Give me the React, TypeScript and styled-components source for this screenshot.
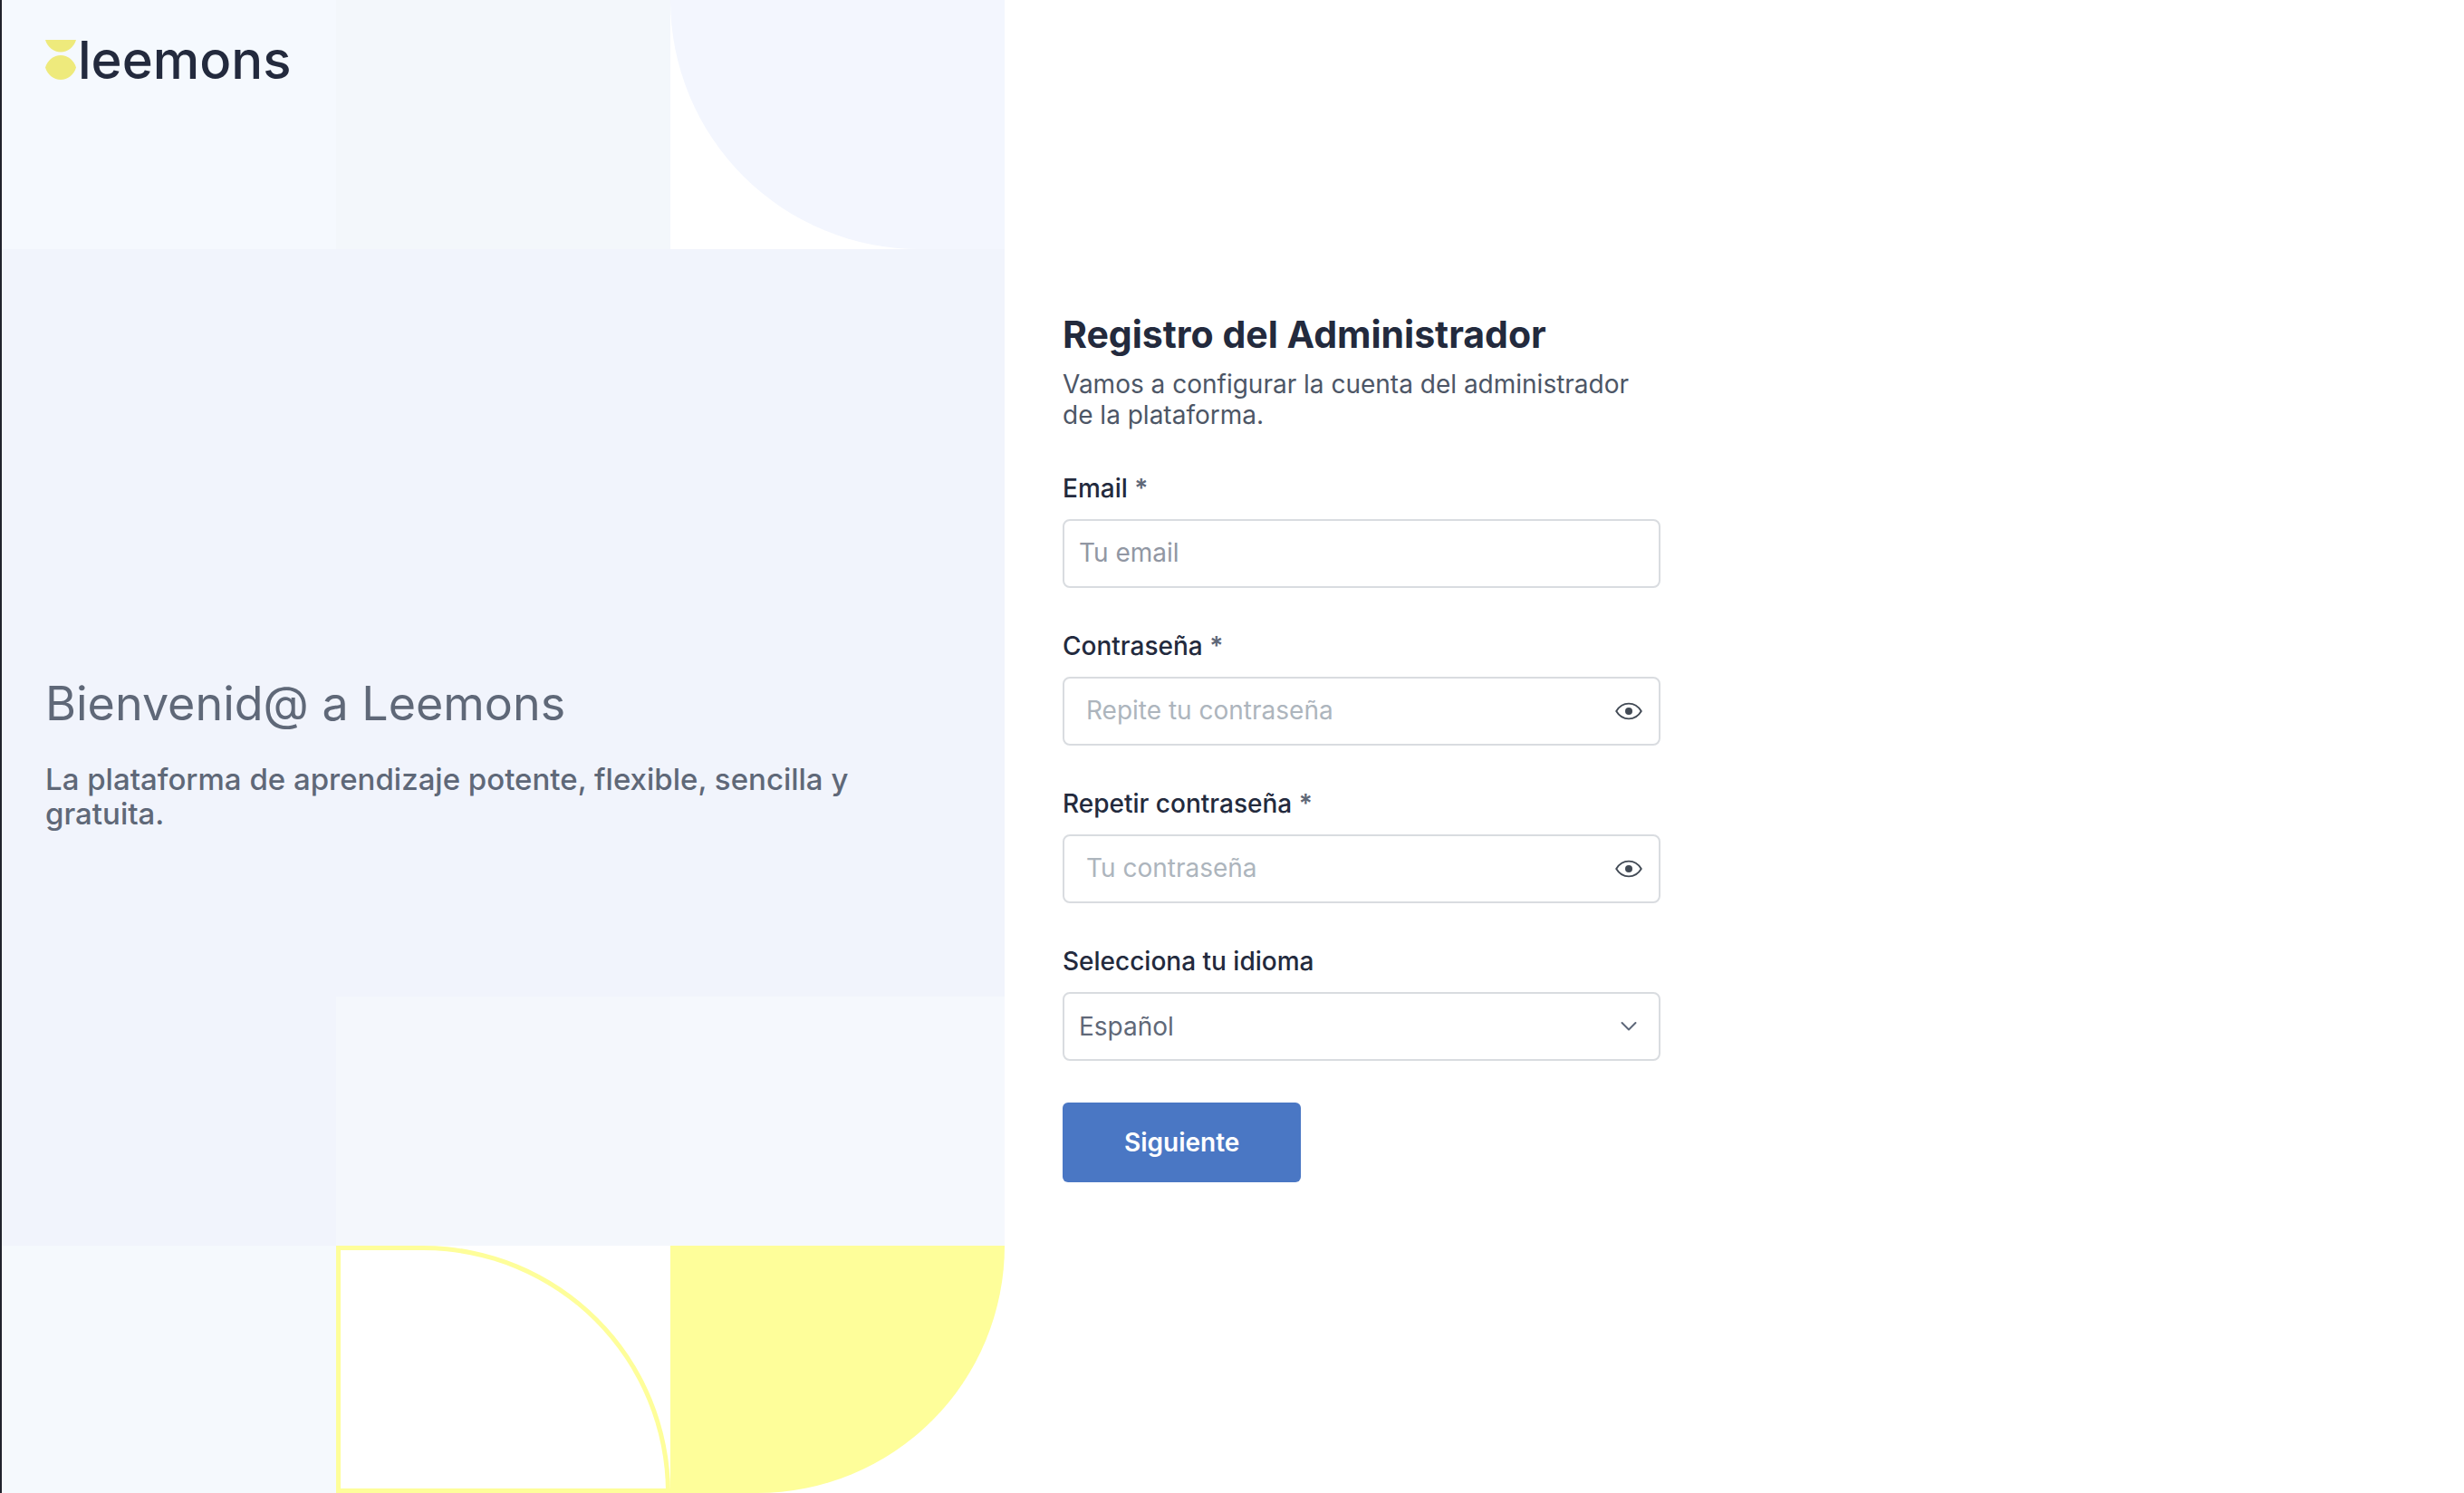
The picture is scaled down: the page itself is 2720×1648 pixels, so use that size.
import React, { useId, useState } from 'react';
import styled, { createGlobalStyle } from 'styled-components';

const GlobalStyle = createGlobalStyle`
  *, *::before, *::after { box-sizing: border-box; }
  body {
    margin: 0;
    background: #ffffff;
    color: #4d5358;
    font-family: Inter, "Noto Sans", sans-serif;
    font-size: 28px;
  }
`;

const color = {
  ink: '#232a3d',
  body: '#4d5666',
  muted: '#5f6878',
  line: '#d9dce0',
  primary: '#4a77c4',
  yellow: '#fefe9a',
};

const Page = styled.main`
  display: grid;
  grid-template-columns: minmax(0, 1109fr) minmax(0, 1611fr);
  min-height: 100vh;
`;

const Hero = styled.section`
  display: grid;
  grid-template-columns: repeat(3, minmax(0, 1fr));
  grid-template-rows: repeat(5, minmax(0, 275fr)) minmax(0, 273fr);
  border-left: 2px solid #20222c;
  background: #f1f4fc;
  overflow: hidden;
`;

const Tile = styled.div<{ $row: number; $col: number; $fill: string }>`
  grid-row: ${(p) => p.$row};
  grid-column: ${(p) => p.$col};
  display: grid;
  background: ${(p) => p.$fill};
`;

const Petal = styled.div<{ $fill: string; $corner: string; $outlined?: boolean }>`
  background: ${(p) => (p.$outlined ? 'transparent' : p.$fill)};
  border: ${(p) => (p.$outlined ? `5px solid ${p.$fill}` : '0')};
  border-${(p) => p.$corner}-radius: 275px;
`;

const Brand = styled.a`
  grid-row: 1;
  grid-column: 1 / -1;
  align-self: start;
  justify-self: start;
  display: flex;
  align-items: center;
  gap: 2px;
  padding: 31px 48px;
  color: ${color.ink};
  font-size: 58px;
  line-height: 70px;
  font-weight: 500;
  text-decoration: none;
`;

const Welcome = styled.div`
  grid-row: 1 / -1;
  grid-column: 1 / -1;
  align-self: center;
  display: grid;
  gap: 32px;
  padding: 14px 120px 0 48px;
  color: ${color.muted};
`;

const WelcomeTitle = styled.h1`
  margin: 0;
  font-size: 52px;
  line-height: 64px;
  font-weight: 400;
`;

const WelcomeText = styled.p`
  margin: 0;
  font-size: 33px;
  line-height: 38px;
  font-weight: 500;
`;

const Content = styled.section`
  display: flex;
  align-items: center;
  padding: 48px 64px;
`;

const Form = styled.form`
  display: flex;
  flex-direction: column;
  gap: 46px;
  width: 100%;
  max-width: 660px;
`;

const Intro = styled.header`
  display: grid;
  gap: 12px;
`;

const Title = styled.h2`
  margin: 0;
  color: ${color.ink};
  font-size: 41px;
  line-height: 52px;
  font-weight: 700;
`;

const Description = styled.p`
  margin: 0;
  color: ${color.body};
  line-height: 34px;
`;

const FieldRoot = styled.div`
  display: grid;
  gap: 16px;
`;

const Label = styled.label`
  color: ${color.ink};
  line-height: 36px;
  font-weight: 500;
`;

const Required = styled.span`
  color: ${color.muted};
  font-weight: 600;
`;

const Control = styled.div<{ $inset: number }>`
  display: flex;
  align-items: center;
  height: 76px;
  padding-left: ${(p) => p.$inset}px;
  border: 2px solid ${color.line};
  border-radius: 8px;
  background: #ffffff;
  &:focus-within { border-color: ${color.primary}; }
`;

const Input = styled.input<{ $hint: string }>`
  flex: 1;
  min-width: 0;
  height: 100%;
  padding: 0 0 2px;
  border: 0;
  outline: 0;
  background: transparent;
  color: ${color.ink};
  font: inherit;
  &::placeholder { color: ${(p) => p.$hint}; opacity: 1; }
`;

const Reveal = styled.button`
  display: flex;
  margin-right: 18px;
  padding: 0;
  border: 0;
  background: transparent;
  color: #424a55;
  cursor: pointer;
`;

const SelectControl = styled(Control)`
  display: grid;
  grid-template-columns: minmax(0, 1fr) 66px;
  & > * { grid-row: 1; }
  & > svg { grid-column: 2; justify-self: center; pointer-events: none; }
`;

const Select = styled.select`
  grid-column: 1 / -1;
  height: 100%;
  padding: 0;
  border: 0;
  outline: 0;
  appearance: none;
  background: transparent;
  color: ${color.muted};
  font: inherit;
`;

const Submit = styled.button`
  align-self: flex-start;
  height: 88px;
  padding: 0 68px;
  border: 0;
  border-radius: 6px;
  background: ${color.primary};
  color: #ffffff;
  font: inherit;
  font-weight: 600;
  cursor: pointer;
`;

function LemonMark() {
  return (
    <svg width="34" height="44" viewBox="0 0 34 44" fill="#eeea7c" aria-hidden="true">
      <path d="M0 0H34C31.500 8 25 13.500 17 13.500S2.500 8 0 0Z" />
      <path d="M0 30.500C2.500 22.500 9 17 17 17S31.500 22.500 34 30.500C31.500 38.500 25 44 17 44S2.500 38.500 0 30.500Z" />
    </svg>
  );
}

function EyeIcon() {
  return (
    <svg width="30" height="20" viewBox="0 0 30 20" fill="none" aria-hidden="true">
      <path
        d="M1.200 10C4.500 4.500 9.500 1.600 15 1.600S25.500 4.500 28.800 10C25.500 15.500 20.500 18.400 15 18.400S4.500 15.500 1.200 10Z"
        stroke="currentColor"
        strokeWidth="1.900"
        strokeLinejoin="round"
      />
      <circle cx="15" cy="10" r="4" fill="currentColor" />
    </svg>
  );
}

function ChevronIcon() {
  return (
    <svg width="18" height="12" viewBox="0 0 18 12" fill="none" aria-hidden="true">
      <path d="M1.500 2L9 9.500L16.500 2" stroke="#5c6678" strokeWidth="2" strokeLinecap="round" strokeLinejoin="round" />
    </svg>
  );
}

function EmailField() {
  const id = useId();
  return (
    <FieldRoot>
      <Label htmlFor={id}>Email <Required>*</Required></Label>
      <Control $inset={16}>
        <Input id={id} type="email" placeholder="Tu email" $hint="#9197a3" />
      </Control>
    </FieldRoot>
  );
}

function PasswordField({ label, placeholder }: { label: string; placeholder: string }) {
  const id = useId();
  const [visible, setVisible] = useState(false);
  return (
    <FieldRoot>
      <Label htmlFor={id}>{label} <Required>*</Required></Label>
      <Control $inset={24}>
        <Input id={id} type={visible ? 'text' : 'password'} placeholder={placeholder} $hint="#adb5bd" />
        <Reveal type="button" aria-label="Mostrar contraseña" onClick={() => setVisible(!visible)}>
          <EyeIcon />
        </Reveal>
      </Control>
    </FieldRoot>
  );
}

function LanguageField() {
  const id = useId();
  return (
    <FieldRoot>
      <Label htmlFor={id}>Selecciona tu idioma</Label>
      <SelectControl $inset={16}>
        <Select id={id} defaultValue="es">
          <option value="es">Español</option>
        </Select>
        <ChevronIcon />
      </SelectControl>
    </FieldRoot>
  );
}

export default function App() {
  return (
    <Page>
      <GlobalStyle />
      <Hero>
        <Tile $row={1} $col={1} $fill="#f5f9fe" />
        <Tile $row={1} $col={2} $fill="#f3f7fb" />
        <Tile $row={1} $col={3} $fill="#ffffff">
          <Petal $fill="#f3f6fe" $corner="bottom-left" />
        </Tile>
        <Tile $row={5} $col={2} $fill="#f4f7fc" />
        <Tile $row={5} $col={3} $fill="#f5f8fd" />
        <Tile $row={6} $col={1} $fill="#f5f9fd" />
        <Tile $row={6} $col={2} $fill="#ffffff">
          <Petal $fill={color.yellow} $corner="top-right" $outlined />
        </Tile>
        <Tile $row={6} $col={3} $fill="#ffffff">
          <Petal $fill={color.yellow} $corner="bottom-right" />
        </Tile>
        <Brand href="#">
          <LemonMark />
          leemons
        </Brand>
        <Welcome>
          <WelcomeTitle>Bienvenid@ a Leemons</WelcomeTitle>
          <WelcomeText>La plataforma de aprendizaje potente, flexible, sencilla y gratuita.</WelcomeText>
        </Welcome>
      </Hero>
      <Content>
        <Form onSubmit={(event) => event.preventDefault()}>
          <Intro>
            <Title>Registro del Administrador</Title>
            <Description>Vamos a configurar la cuenta del administrador de la plataforma.</Description>
          </Intro>
          <EmailField />
          <PasswordField label="Contraseña" placeholder="Repite tu contraseña" />
          <PasswordField label="Repetir contraseña" placeholder="Tu contraseña" />
          <LanguageField />
          <Submit type="submit">Siguiente</Submit>
        </Form>
      </Content>
    </Page>
  );
}
